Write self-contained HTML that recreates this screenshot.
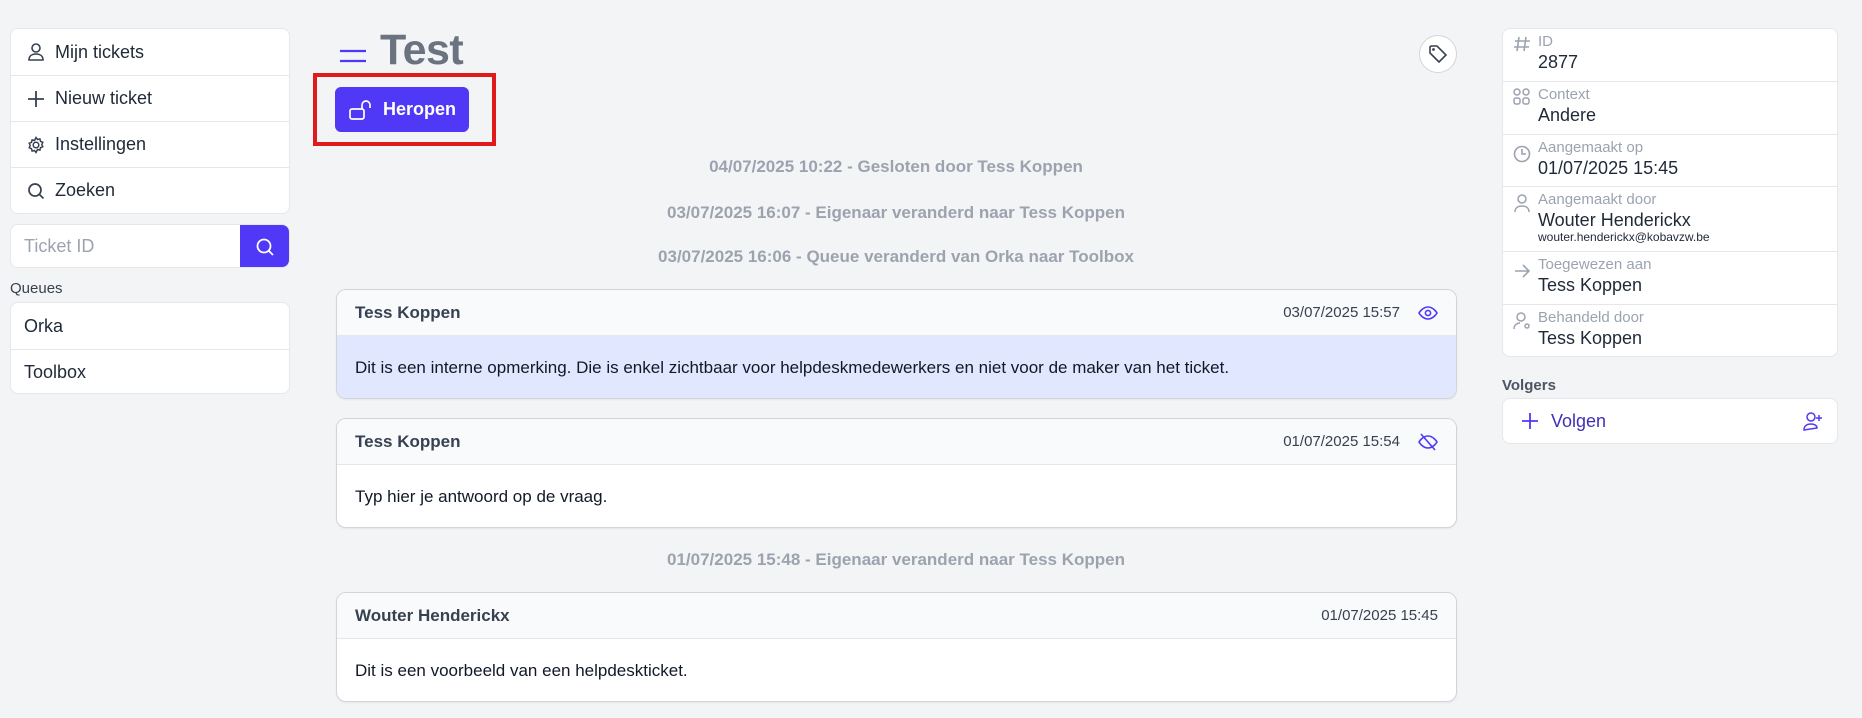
<!DOCTYPE html>
<html><head><meta charset="utf-8"><style>
*{box-sizing:border-box;margin:0;padding:0}
body{width:1862px;height:718px;background:#f3f4f6;font-family:"Liberation Sans",sans-serif;color:#111827;position:relative;overflow:hidden}
.abs{position:absolute}
.box{background:#fff;border:1px solid #e5e7eb;border-radius:8px;overflow:hidden}
.nav div{height:46px;display:flex;align-items:center;padding-left:16px;font-size:18px;color:#1f2937;border-top:1px solid #e5e7eb}
.nav div:first-child{border-top:none}
.nav svg{margin-right:10px}
.q div{height:46px;display:flex;align-items:center;padding-left:13px;font-size:18px;color:#1f2937;border-top:1px solid #e5e7eb}
.q div:first-child{border-top:none}
.ev{position:absolute;left:336px;width:1120px;text-align:center;font-weight:bold;font-size:17px;color:#9ca3af}
.card{position:absolute;left:336px;width:1121px;height:110px;background:#fff;border:1px solid #d1d5db;border-radius:10px;overflow:hidden;box-shadow:0 1px 2px rgba(0,0,0,.06)}
.card .h{height:46px;background:#f9fafb;border-bottom:1px solid #e5e7eb;display:flex;align-items:center;padding:0 18px;font-weight:bold;font-size:17px;color:#374151}
.card .h span.d{margin-left:auto;font-weight:normal;font-size:15px;color:#374151}
.card .b{padding:0 18px;height:63px;display:flex;align-items:center;font-size:17px}
.rp .r{border-top:1px solid #e5e7eb;position:relative;padding-left:35px}
.rp .r:first-child{border-top:none}
.rp .l{font-size:15px;color:#9ca3af;line-height:18px}
.rp .v{font-size:18px;color:#1f2937;line-height:22px}
.rp svg{position:absolute;left:10px;top:6px}
</style></head><body>
<div class="abs box nav" style="left:10px;top:28px;width:280px;height:186px">
<div><svg width="18" height="20" viewBox="0 0 18 20" fill="none" stroke="#374151" stroke-width="1.6"><circle cx="9" cy="6" r="4"/><path d="M2 18c0-4 3-6 7-6s7 2 7 6z"/></svg>Mijn tickets</div>
<div><svg width="18" height="18" viewBox="0 0 18 18" stroke="#374151" stroke-width="1.8"><path d="M9 1v16M1 9h16"/></svg>Nieuw ticket</div>
<div><svg width="18" height="18" viewBox="0 0 18 18" fill="none" stroke="#374151" stroke-width="1.5"><circle cx="9" cy="9" r="2.8"/><path d="M9 1.5l1.5 2 2.4-.6.6 2.4 2.3 1-1 2.2 1 2.2-2.3 1-.6 2.4-2.4-.6L9 16.5l-1.5-2-2.4.6-.6-2.4-2.3-1 1-2.2-1-2.2 2.3-1 .6-2.4 2.4.6z"/></svg>Instellingen</div>
<div><svg width="18" height="18" viewBox="0 0 18 18" fill="none" stroke="#374151" stroke-width="1.7"><circle cx="8" cy="8" r="6"/><path d="M12.5 12.5l4 4"/></svg>Zoeken</div>
</div>
<div class="abs" style="left:10px;top:224px;width:280px;height:44px;background:#fff;border:1px solid #e5e7eb;border-radius:8px;overflow:hidden">
<div style="position:absolute;left:13px;top:11px;font-size:18px;color:#9ca3af">Ticket ID</div>
<div style="position:absolute;right:0;top:0;width:49px;height:44px;background:#4f39f6;display:flex;align-items:center;justify-content:center"><svg width="20" height="20" viewBox="0 0 20 20" fill="none" stroke="#fff" stroke-width="1.8"><circle cx="9" cy="9" r="6.5"/><path d="M14 14l4 4"/></svg></div>
</div>
<div class="abs" style="left:10px;top:280px;font-size:15px;color:#374151">Queues</div>
<div class="abs box q" style="left:10px;top:302px;width:280px;height:92px"><div>Orka</div><div>Toolbox</div></div>

<svg class="abs" style="left:339px;top:48px" width="28" height="16"><path d="M1 3h26M1 13h26" stroke="#4f39f6" stroke-width="2.2"/></svg>
<div class="abs" style="left:380px;top:26px;font-size:43px;font-weight:bold;color:#6b7280;letter-spacing:-0.5px">Test</div>
<div class="abs" style="left:313px;top:73px;width:183px;height:73px;border:4px solid #e01b1b"></div>
<div class="abs" style="left:335px;top:87px;width:134px;height:45px;background:#4f39f6;border-radius:6px;color:#fff;font-weight:bold;font-size:18px;display:flex;align-items:center;padding-left:14px">
<svg width="24" height="22" viewBox="0 0 24 22" fill="none" stroke="#fff" stroke-width="1.7" style="margin-right:10px"><rect x="1" y="10" width="14" height="10" rx="2"/><path d="M13 10V6a4 4 0 0 1 8 0v3"/></svg>Heropen</div>
<div class="abs" style="left:1419px;top:35px;width:38px;height:38px;border-radius:50%;background:#fff;border:1px solid #d1d5db;display:flex;align-items:center;justify-content:center"><svg width="22" height="22" viewBox="0 0 22 22" fill="none" stroke="#374151" stroke-width="1.6"><path d="M3 4l1-1 6 0 9 9-7 7-9-9z"/><circle cx="6.5" cy="6.5" r=".6" fill="#374151"/></svg></div>

<div class="ev" style="top:157px">04/07/2025 10:22 - Gesloten door Tess Koppen</div>
<div class="ev" style="top:203px">03/07/2025 16:07 - Eigenaar veranderd naar Tess Koppen</div>
<div class="ev" style="top:247px">03/07/2025 16:06 - Queue veranderd van Orka naar Toolbox</div>

<div class="card" style="top:289px"><div class="h">Tess Koppen<span class="d">03/07/2025 15:57</span><svg style="margin-left:18px" width="20" height="16" viewBox="0 0 20 16" fill="none" stroke="#4f39f6" stroke-width="1.6"><path d="M1 8s3.5-6 9-6 9 6 9 6-3.5 6-9 6-9-6-9-6z"/><circle cx="10" cy="8" r="2.6"/></svg></div><div class="b" style="background:#e0e7ff">Dit is een interne opmerking. Die is enkel zichtbaar voor helpdeskmedewerkers en niet voor de maker van het ticket.</div></div>
<div class="card" style="top:418px"><div class="h">Tess Koppen<span class="d">01/07/2025 15:54</span><svg style="margin-left:18px" width="20" height="18" viewBox="0 0 20 18" fill="none" stroke="#4f39f6" stroke-width="1.6"><path d="M1 9s3.5-6 9-6 9 6 9 6-3.5 6-9 6-9-6-9-6z"/><path d="M3 1l14 16"/></svg></div><div class="b">Typ hier je antwoord op de vraag.</div></div>
<div class="ev" style="top:550px">01/07/2025 15:48 - Eigenaar veranderd naar Tess Koppen</div>
<div class="card" style="top:592px"><div class="h">Wouter Henderickx<span class="d">01/07/2025 15:45</span></div><div class="b">Dit is een voorbeeld van een helpdeskticket.</div></div>

<div class="abs box rp" style="left:1502px;top:28px;width:336px;height:329px">
<div class="r" style="height:52px;padding-top:4px"><svg width="18" height="18" viewBox="0 0 18 18" stroke="#9ca3af" stroke-width="1.6"><path d="M6 2L4 16M13 2l-2 14M2 6h15M1 12h15"/></svg><div class="l">ID</div><div class="v">2877</div></div>
<div class="r" style="height:53px;padding-top:4px"><svg width="18" height="18" viewBox="0 0 18 18" fill="none" stroke="#9ca3af" stroke-width="1.5"><rect x="1" y="1" width="6" height="6" rx="3"/><rect x="10" y="1" width="6" height="6" rx="3"/><rect x="1" y="10" width="6" height="6" rx="2"/><rect x="10" y="10" width="6" height="6" rx="2"/></svg><div class="l">Context</div><div class="v">Andere</div></div>
<div class="r" style="height:52px;padding-top:4px"><svg width="18" height="18" viewBox="0 0 18 18" fill="none" stroke="#9ca3af" stroke-width="1.6" style="top:10px"><circle cx="9" cy="9" r="7.5"/><path d="M9 4v5h4"/></svg><div class="l">Aangemaakt op</div><div class="v">01/07/2025 15:45</div></div>
<div class="r" style="height:65px;padding-top:4px"><svg width="18" height="20" viewBox="0 0 18 20" fill="none" stroke="#9ca3af" stroke-width="1.5"><circle cx="9" cy="6" r="4"/><path d="M2 19c0-4 3-6 7-6s7 2 7 6"/></svg><div class="l">Aangemaakt door</div><div class="v">Wouter Henderickx</div><div style="font-size:12px;color:#1f2937;line-height:13px">wouter.henderickx@kobavzw.be</div></div>
<div class="r" style="height:53px;padding-top:4px"><svg width="18" height="18" viewBox="0 0 18 18" fill="none" stroke="#9ca3af" stroke-width="1.6" style="top:10px"><path d="M2 9h14M10 3l6 6-6 6"/></svg><div class="l">Toegewezen aan</div><div class="v">Tess Koppen</div></div>
<div class="r" style="height:53px;padding-top:4px"><svg width="18" height="20" viewBox="0 0 18 20" fill="none" stroke="#9ca3af" stroke-width="1.5"><circle cx="8" cy="6" r="4"/><path d="M1 18c0-4 3-6 6-6"/><circle cx="14" cy="15" r="2"/></svg><div class="l">Behandeld door</div><div class="v">Tess Koppen</div></div>
</div>
<div class="abs" style="left:1502px;top:377px;font-size:15px;color:#4b5563;font-weight:bold">Volgers</div>
<div class="abs box" style="left:1502px;top:398px;width:336px;height:46px;display:flex;align-items:center;padding:0 14px 0 18px;color:#3f2fb8;font-size:18px">
<svg width="18" height="18" viewBox="0 0 18 18" stroke="#4f39f6" stroke-width="1.8" style="margin-right:12px"><path d="M9 1v16M1 9h16"/></svg>Volgen
<svg style="margin-left:auto" width="20" height="20" viewBox="0 0 20 20" fill="none" stroke="#4f39f6" stroke-width="1.5"><circle cx="8" cy="6" r="4"/><path d="M1 19c0-4 3-6 7-6s6 2 6 4zM16 4v6M13 7h6"/></svg></div>
</body></html>
